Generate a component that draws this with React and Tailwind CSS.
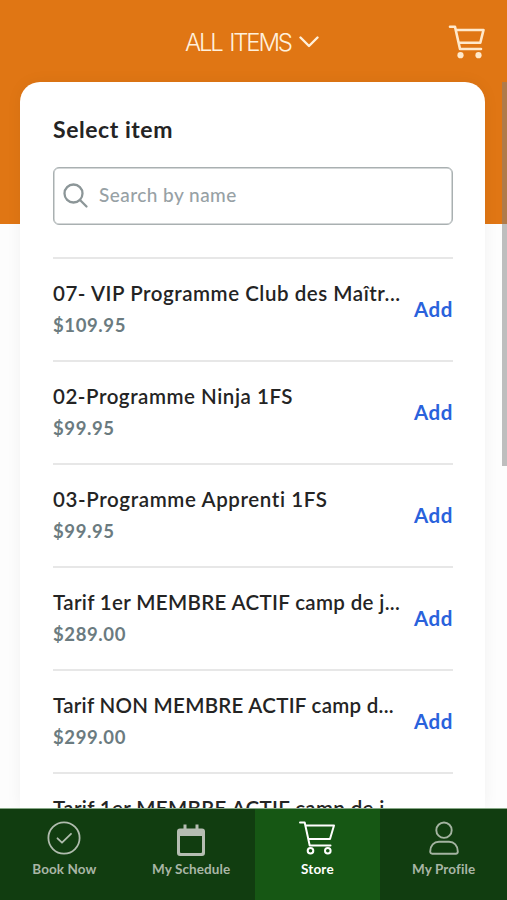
const items = [
  { name: '07- VIP Programme Club des Maîtr...', price: '$109.95', tracking: 'tracking-[0.54px]' },
  { name: '02-Programme Ninja 1FS', price: '$99.95', tracking: 'tracking-[0.54px]' },
  { name: '03-Programme Apprenti 1FS', price: '$99.95', tracking: 'tracking-[0.62px]' },
  { name: 'Tarif 1er MEMBRE ACTIF camp de j...', price: '$289.00', tracking: 'tracking-[0.34px]' },
  { name: 'Tarif NON MEMBRE ACTIF camp d...', price: '$299.00', tracking: 'tracking-[0.27px]' },
  { name: 'Tarif 1er MEMBRE ACTIF camp de j...', price: '$289.00', tracking: 'tracking-[0.34px]' },
];

function HeaderCart() {
  return (
    <svg width="37" height="34" viewBox="0 0 37 34" fill="none" stroke="#ffe9cc" strokeWidth="2.6" strokeLinejoin="round" strokeLinecap="round">
      <path d="M2 1.8H7L12 24H33M8.100 5H35.5L32.3 17.8H10.8" />
      <circle cx="12.500" cy="30.2" r="3.1" fill="#ffe9cc" stroke="none" />
      <circle cx="30.500" cy="30.2" r="3.1" fill="#ffe9cc" stroke="none" />
    </svg>
  );
}

function StoreIcon() {
  return (
    <svg width="37" height="34" viewBox="0 0 37 34" fill="none" stroke="#fff" strokeWidth="2" strokeLinejoin="round" strokeLinecap="round">
      <path d="M1 1.5H5.7L10.7 24.5H31.5M6.5 4.5H35L31 18H9.3" />
      <circle cx="11.500" cy="29.7" r="2.8" />
      <circle cx="28.800" cy="29.7" r="2.8" />
    </svg>
  );
}

function BookIcon() {
  return (
    <svg width="34" height="34" viewBox="0 0 34 34" fill="none" stroke="#b0bcae" strokeWidth="1.8" strokeLinecap="round" strokeLinejoin="round">
      <circle cx="17" cy="17" r="15.6" />
      <path d="M10.500 17.300L15 21.700L24 12.800" />
    </svg>
  );
}

function ScheduleIcon() {
  return (
    <svg width="28" height="35" viewBox="0 0 28 35" fill="#b5bdb2">
      <path fillRule="evenodd" d="M6.500 3.500h3v4h9v-4h3v4h3.500a3 3 0 0 1 3 3v21.500a3 3 0 0 1-3 3H3a3 3 0 0 1-3-3V10.500a3 3 0 0 1 3-3h3.500zM3 15v16a1 1 0 0 0 1 1h20a1 1 0 0 0 1-1V15z" />
    </svg>
  );
}

function ProfileIcon() {
  return (
    <svg width="30" height="34" viewBox="0 0 30 34" fill="none" stroke="#a4b3a1" strokeWidth="1.9" strokeLinejoin="round">
      <circle cx="15" cy="9.200" r="7.700" />
      <path d="M1.200 30.500C1.200 24.500 5 20.800 10 20.800H20C25 20.800 28.800 24.500 28.800 30.500C28.800 32 28 32.700 26.800 32.700H3.200C2 32.700 1.200 32 1.200 30.500Z" />
    </svg>
  );
}

function Tab({ icon, label, active, tracking }) {
  return (
    <div className={`flex flex-col items-center pt-[12px] ${active ? 'w-[126px] bg-[#165714] text-white' : 'w-[127px] text-[#a9b6a6]'}`}>
      <div className="flex h-[36px] items-start justify-center">{icon}</div>
      <span className={`mt-[2px] whitespace-nowrap text-[13.500px] leading-[20px] font-bold ${tracking}`}>{label}</span>
    </div>
  );
}

export default function App() {
  return (
    <div className="relative flex h-[900px] w-[507px] flex-col overflow-hidden bg-[#fdfdfd] font-[Lato,sans-serif]">
      <div className="h-[224px] shrink-0 bg-[#e07614]">
        <header className="flex h-[82px] items-center pt-[2px]">
          <div className="ml-[185px] flex h-full w-[134px] items-center justify-between">
            <h1 className="whitespace-nowrap pt-[2px] font-[Inter,sans-serif] text-[24px] font-light tracking-[-2.2px] text-[#fff0dc] [word-spacing:3px]">ALL ITEMS</h1>
            <svg width="20" height="12" viewBox="0 0 20 12" fill="none" stroke="#fff0dc" strokeWidth="2.4" strokeLinecap="round" strokeLinejoin="round">
              <path d="M1.500 1.500L10 10L18.500 1.500" />
            </svg>
          </div>
          <div className="ml-[129px]"><HeaderCart /></div>
        </header>
      </div>

      <main className="-mt-[142px] ml-[20px] h-[726px] w-[465px] shrink-0 overflow-hidden rounded-t-[20px] bg-white px-[33px] shadow-[0_0_16px_rgba(0,0,0,0.05)]">
        <h2 className="mt-[33px] text-[23px] leading-[28px] font-bold tracking-[0.55px] text-[#242424]">Select item</h2>
        <div className="mt-[24px] flex h-[58px] w-[400px] items-center rounded-[6px] border-[1.500px] border-[#a9b0b1] pl-[9px] shadow-[inset_0_0_0_0.500px_#a9b0b1]">
          <svg width="26" height="26" viewBox="0 0 26 26" fill="none" stroke="#8c9698" strokeWidth="2.3" strokeLinecap="round">
            <circle cx="10.500" cy="10.500" r="9" />
            <path d="M17 17L23.500 23.500" />
          </svg>
          <span className="ml-[10px] pb-[2px] text-[19px] font-medium tracking-[0.45px] text-[#97a1a5]">Search by name</span>
        </div>
        <ul className="mt-[32px] w-[400px]">
          {items.map((item, i) => (
            <li key={i} className="flex h-[103px] items-center justify-between border-t-2 border-[#e7e7e7]">
              <div className="pb-[1px]">
                <p className={`whitespace-nowrap text-[20.500px] leading-[31px] font-semibold text-[#242424] ${item.tracking}`}>{item.name}</p>
                <p className="pt-px text-[18.500px] leading-[31px] font-bold tracking-[0.6px] text-[#6b7b80]">{item.price}</p>
              </div>
              <button className="text-[20.500px] font-bold tracking-[0.6px] text-[#2a62dc]">Add</button>
            </li>
          ))}
        </ul>
      </main>

      <nav className="flex h-[92px] shrink-0 border-t border-[#87a887] bg-[#113d10] pl-[1px]">
        <Tab icon={<BookIcon />} label="Book Now" tracking="tracking-[0.1px]" />
        <Tab icon={<ScheduleIcon />} label="My Schedule" tracking="tracking-[0.1px]" />
        <Tab icon={<StoreIcon />} label="Store" active tracking="tracking-[0.2px]" />
        <Tab icon={<ProfileIcon />} label="My Profile" tracking="tracking-[0.1px]" />
      </nav>
      <div className="absolute top-[82px] right-0 h-[384px] w-[5px] bg-[#808080]/50" />
    </div>
  );
}
